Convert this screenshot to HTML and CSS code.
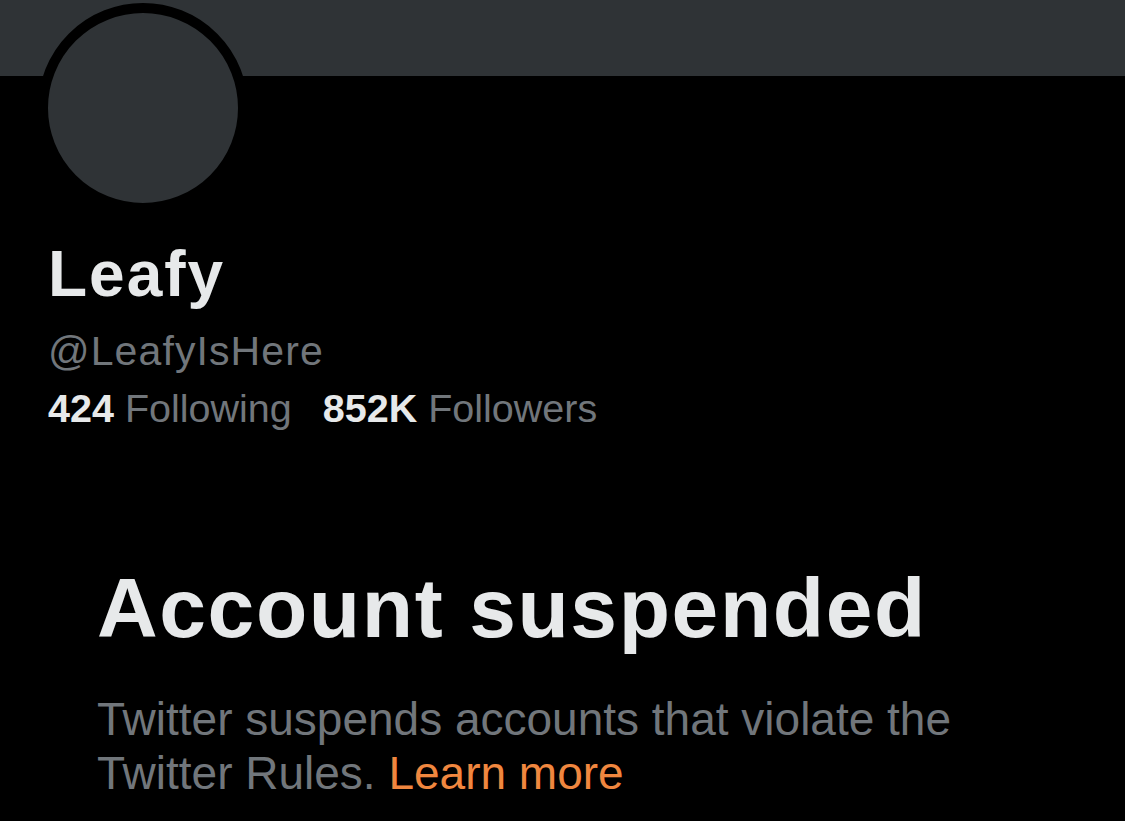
FILE: index.html
```html
<!DOCTYPE html>
<html lang="en">
<head>
<meta charset="utf-8">
<title>Leafy (@LeafyIsHere)</title>
<link rel="stylesheet" href="styles.css">
</head>
<body>
<div class="page">
  <div class="banner"></div>
  <div class="profile">
    <div class="avatar"></div>
    <div class="name">Leafy</div>
    <div class="handle">@LeafyIsHere</div>
    <div class="stats">
      <span class="stat"><b>424</b> Following</span>
      <span class="stat"><b>852K</b> Followers</span>
    </div>
  </div>
  <div class="notice">
    <h1 class="notice-title">Account suspended</h1>
    <p class="notice-text">Twitter suspends accounts that violate the Twitter Rules. <a class="link" href="#">Learn more</a></p>
  </div>
</div>
</body>
</html>
```

FILE: styles.css
```css
html, body {
  margin: 0;
  padding: 0;
  background: #000;
}
.page {
  width: 1125px;
  height: 821px;
  overflow: hidden;
  background: #000;
  font-family: "Liberation Sans", Arial, sans-serif;
  color: #e7e9ea;
}
.banner {
  height: 76px;
  background: #2f3336;
}
.profile {
  display: flex;
  flex-direction: column;
  padding-left: 48px;
}
.avatar {
  width: 190px;
  height: 190px;
  border-radius: 50%;
  background: #2f3336;
  border: 10px solid #000;
  margin-left: -10px;
  margin-top: -73px;
}
.name {
  margin-top: 26px;
  font-size: 64px;
  font-weight: 700;
  line-height: 70px;
  letter-spacing: 2px;
  color: #e7e9ea;
}
.handle {
  margin-top: 17px;
  font-size: 41px;
  line-height: 50px;
  letter-spacing: 1.1px;
  color: #71767b;
}
.stats {
  margin-top: 7px;
  display: flex;
  gap: 31px;
  font-size: 39.5px;
  line-height: 50px;
  color: #71767b;
}
.stat b {
  color: #e7e9ea;
  font-weight: 700;
}
.notice {
  padding-left: 97px;
  padding-top: 127px;
}
.notice-title {
  margin: 0;
  font-size: 84px;
  font-weight: 700;
  line-height: 96px;
  letter-spacing: 1.6px;
  color: #e7e9ea;
}
.notice-text {
  margin: 36px 0 0;
  width: 920px;
  font-size: 46px;
  line-height: 54px;
  color: #71767b;
}
.link {
  color: #f0873f;
  text-decoration: none;
}
```
